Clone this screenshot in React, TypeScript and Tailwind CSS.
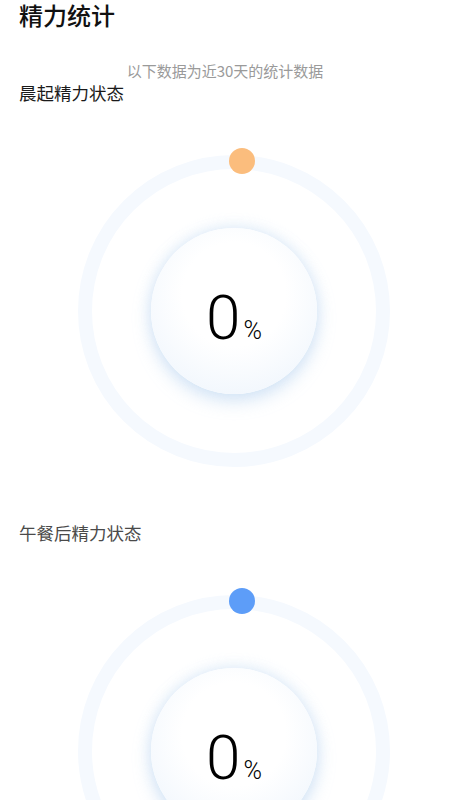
import React from "react";

const cjk = { fontFamily: '"Noto Sans CJK SC", "Noto Sans", sans-serif' };
const num = { fontFamily: 'Roboto, "Noto Sans", sans-serif' };

function Gauge({ dot }: { dot: string }) {
  return (
    <div className="relative ml-[78px] flex h-[312px] w-[312px] items-center justify-center rounded-full border-[14px] border-[#f5f9fe]">
      <div
        className={`absolute left-[137px] top-[-21px] h-[26px] w-[26px] rounded-full ${dot}`}
      />
      <div className="flex h-[166px] w-[166px] items-center justify-center rounded-full bg-[radial-gradient(circle_at_50%_40%,#ffffff_40%,#ebf3fc_100%)] shadow-[0_7px_18px_rgba(150,190,232,0.4),0_-3px_14px_rgba(210,228,246,0.45)]">
        <div className="flex items-baseline pt-[14px] text-black" style={num}>
          <span className="text-[62px] leading-none font-light">0</span>
          <span className="ml-[3px] text-[25px] leading-none font-light">%</span>
        </div>
      </div>
    </div>
  );
}

export default function App() {
  return (
    <div className="h-[800px] w-[450px] overflow-hidden bg-white" style={cjk}>
      <div className="px-[19px] pt-px text-[24px] leading-[28px] font-medium text-[#111]">精力统计</div>
      <div className="mt-[32px] text-center text-[15px] leading-[20px] text-[#9a9a9a]">
        以下数据为近30天的统计数据
      </div>
      <div className="mt-px px-[19px] text-[17.5px] leading-[22px] text-[#1a1a1a]">晨起精力状态</div>
      <div className="mt-[51px]">
        <Gauge dot="bg-[#fbbd7d]" />
      </div>
      <div className="mt-[55px] px-[19px] text-[17.5px] leading-[22px] text-[#4a4a4a]">午餐后精力状态</div>
      <div className="mt-[51px]">
        <Gauge dot="bg-[#5d9df8]" />
      </div>
    </div>
  );
}
